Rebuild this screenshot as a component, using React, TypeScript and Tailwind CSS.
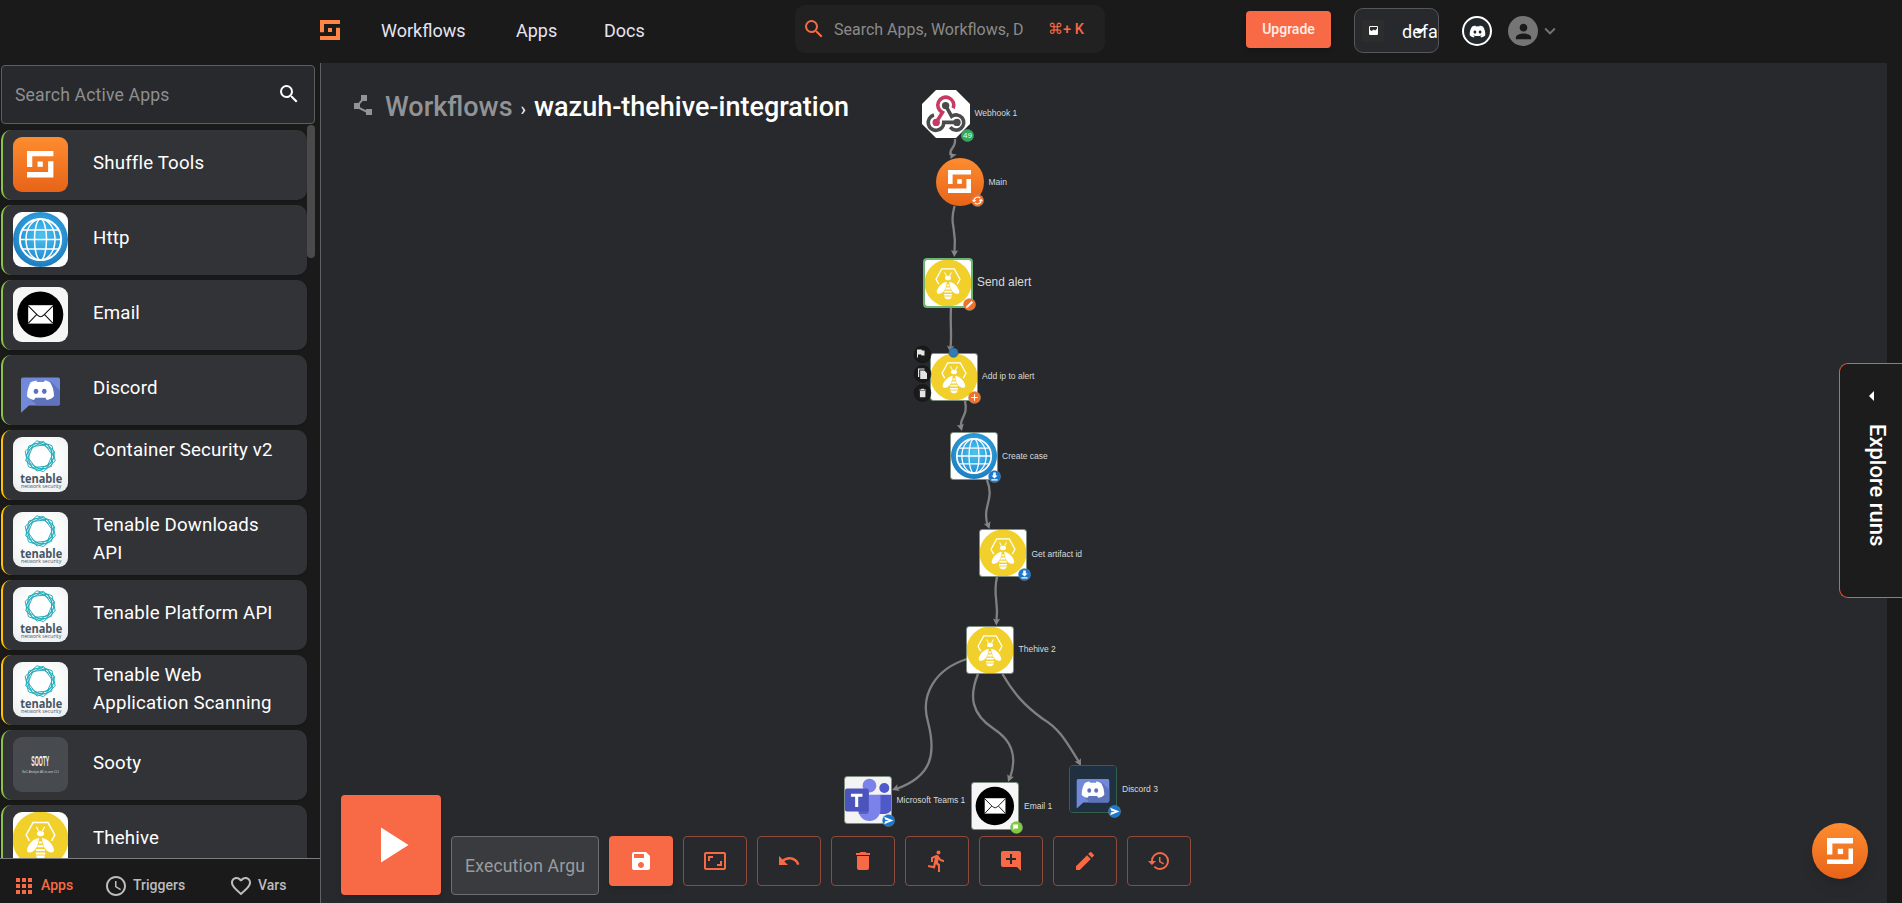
import React from "react";
import {
  MdAccessTime,
  MdAddComment,
  MdApps,
  MdAspectRatio,
  MdDelete,
  MdDirectionsRun,
  MdEdit,
  MdExpandMore,
  MdFavoriteBorder,
  MdHistory,
  MdPerson,
  MdPlayArrow,
  MdPolyline,
  MdSave,
  MdSearch,
  MdUndo,
} from "react-icons/md";
import { FaDiscord } from "react-icons/fa";

/* ---------- logos ---------- */

function ShuffleMark({ className }: { className?: string }) {
  return (
    <svg viewBox="0 0 20 20" className={className} fill="currentColor">
      <path d="M0 0H20V4H4V12.2H0Z" />
      <path d="M20 20H0V16H16V7.8H20Z" />
      <rect x="8" y="8" width="4" height="4" />
    </svg>
  );
}

function ShuffleLogo() {
  return (
    <div className="flex size-full items-center justify-center bg-linear-to-b from-[#fd8c2f] to-[#e86318] text-white">
      <ShuffleMark className="size-[48%]" />
    </div>
  );
}

function GlobeLogo() {
  return (
    <svg viewBox="0 0 55 55" className="block size-full">
      <defs>
        <radialGradient id="globe" cx="0.52" cy="0.42" r="0.55">
          <stop offset="0" stopColor="#4cc4f2" />
          <stop offset="0.6" stopColor="#2f9ddb" />
          <stop offset="1" stopColor="#1f7fc0" />
        </radialGradient>
      </defs>
      <rect width="55" height="55" fill="#fff" />
      <circle cx="27.5" cy="27.5" r="27.5" fill="url(#globe)" />
      <g fill="none" stroke="#fff" strokeWidth="1.5">
        <circle cx="27.5" cy="27.5" r="20.6" strokeWidth="2" />
        <ellipse cx="27.5" cy="27.5" rx="6" ry="20.6" />
        <ellipse cx="27.5" cy="27.5" rx="14.5" ry="20.6" />
        <path d="M7 27.5H48M10 18H45M10 37H45" />
      </g>
    </svg>
  );
}

function EmailLogo() {
  return (
    <svg viewBox="0 0 55 55" className="block size-full">
      <rect width="55" height="55" fill="#f6f6f6" />
      <circle cx="27.3" cy="27.5" r="23" fill="#000" />
      <rect x="15.2" y="18.2" width="24.8" height="18.4" fill="#fff" />
      <path
        d="M15.2 18.8L24.5 28.2Q27.6 31.4 30.7 28.2L40 18.8M15.4 36.2L23.6 27.6M39.8 36.2L31.6 27.6"
        fill="none"
        stroke="#111"
        strokeWidth="1.1"
      />
    </svg>
  );
}

function DiscordBubble() {
  return (
    <svg viewBox="0 0 55 55" className="block size-full">
      <path
        d="M10 15.5H45Q47 15.5 47 17.5V41.5Q47 43.5 45 43.5H16L8 50.8V17.5Q8 15.5 10 15.5Z"
        fill="#7289da"
      />
      <path d="M37.5 19L47 28.5V41.5Q47 43.5 45 43.5H24L15 35Z" fill="#5f73bd" />
      <path
        d="M23.3 18.6C20.6 19 18.3 20 17.5 20.6C15.5 24.3 14 28.6 14 34.3C15.6 36.5 18.5 37.7 21 38L22.4 35.8H32.4L33.8 38C36.5 37.7 39.2 36.5 41 34.3C41 28.6 39.5 24.3 37.3 20.6C36 19.8 34 19 31.6 18.6L31 20H24Z"
        fill="#fff"
      />
      <ellipse cx="23" cy="29.3" rx="2.3" ry="2.6" fill="#5f73bd" />
      <ellipse cx="31.3" cy="29.3" rx="2.3" ry="2.6" fill="#5f73bd" />
    </svg>
  );
}

function DiscordTile() {
  return (
    <div className="size-full bg-[#203040]">
      <DiscordBubble />
    </div>
  );
}

function polygonPoints(radius: number, turn: number) {
  return Array.from({ length: 6 }, (_, i) => {
    const a = ((turn + i * 60) * Math.PI) / 180;
    return `${(27.2 + radius * Math.cos(a)).toFixed(2)},${(19.2 + radius * Math.sin(a)).toFixed(2)}`;
  }).join(" ");
}

function TenableLogo() {
  return (
    <svg viewBox="0 0 55 55" className="block size-full">
      <defs>
        <radialGradient id="tenable" cx="0.5" cy="0.4" r="0.7">
          <stop offset="0.4" stopColor="#fff" />
          <stop offset="1" stopColor="#eceff0" />
        </radialGradient>
      </defs>
      <rect width="55" height="55" fill="url(#tenable)" />
      <g fill="none" stroke="#25adbb" strokeWidth="1">
        <polygon points={polygonPoints(15.8, 18)} />
        <polygon points={polygonPoints(15.2, 42)} />
        <polygon points={polygonPoints(14, 5)} />
        <polygon points={polygonPoints(13, 30)} />
        <polygon points={polygonPoints(12.2, 54)} />
      </g>
      <text
        x="7.2"
        y="46.2"
        fontSize="12.6"
        fontWeight="700"
        textLength="42"
        lengthAdjust="spacingAndGlyphs"
        fontFamily="Open Sans, sans-serif"
        fill="#465564"
      >
        tenable
      </text>
      <text
        x="8"
        y="51.2"
        fontSize="5.8"
        textLength="40.3"
        lengthAdjust="spacingAndGlyphs"
        fontFamily="Open Sans, sans-serif"
        fill="#465564"
      >
        network security
      </text>
    </svg>
  );
}

function SootyLogo() {
  return (
    <svg viewBox="0 0 55 55" className="block size-full">
      <rect width="55" height="55" fill="#474b50" />
      <text
        x="18.3"
        y="29"
        fontSize="14"
        fontWeight="700"
        textLength="18"
        lengthAdjust="spacingAndGlyphs"
        fontFamily="Liberation Sans, sans-serif"
        fill="#f2f2f2"
      >
        SOOTY
      </text>
      <text
        x="9"
        y="36"
        fontSize="3.4"
        textLength="37"
        lengthAdjust="spacingAndGlyphs"
        fontFamily="Liberation Sans, sans-serif"
        fill="#c9cbcd"
      >
        SoC Analyst All-in-one CLI
      </text>
    </svg>
  );
}

function BeeLogo() {
  return (
    <svg viewBox="0 0 55 55" className="block size-full">
      <rect width="55" height="55" fill="#fff" />
      <circle cx="27.5" cy="27.5" r="28" fill="#f2d02c" />
      <path
        d="M16.4 28.8L13.2 23L20 10.6H35L41.8 23L38.6 28.8"
        fill="none"
        stroke="#fff"
        strokeWidth="1.5"
      />
      <g fill="none" stroke="#fff" strokeWidth="1.2">
        <path d="M23.4 14.8L25.6 19M31.6 14.8L29.4 19" />
      </g>
      <ellipse cx="27.5" cy="21.6" rx="3.6" ry="2.7" fill="#fff" />
      <path d="M26 26C20 26.6 14.4 33.4 14 38C13.9 40 15.4 40.8 17.4 40.4C22.6 39.4 25.6 33 26 26Z" fill="#fff" />
      <path d="M29 26C35 26.6 40.6 33.4 41 38C41.1 40 39.6 40.8 37.6 40.4C32.4 39.4 29.4 33 29 26Z" fill="#fff" />
      <g fill="#fff">
        <path d="M26.5 29.4H28.5L29.3 31.4H25.7Z" />
        <path d="M25.1 33H29.9L30.9 35.2H24.1Z" />
        <path d="M23.5 36.9H31.5L32.1 39H22.9Z" />
        <path d="M22.8 40.6H32.2V42.4H22.8Z" />
        <path d="M22.9 43.6H32.1C31.4 46 29.5 47 27.5 47C25.5 47 23.6 46 22.9 43.6Z" />
      </g>
    </svg>
  );
}

function WebhookLogo() {
  return (
    <svg viewBox="0 0 48 48" className="block size-full">
      <path d="M14 0H34L48 14V34L34 48H14L0 34V14Z" fill="#fff" />
      <g fill="none" strokeWidth="3.6">
        <path d="M14.2 32.4L20.4 22.4A8 8 0 1 1 31.2 18.2" stroke="#c73a63" />
        <path d="M23.6 15.5L29.6 26.4A7.6 7.6 0 1 1 28.2 37.2" stroke="#4b4b4b" />
        <path d="M35 32.4H21.8A7.8 7.8 0 1 1 12 25" stroke="#4b4b4b" />
      </g>
      <circle cx="23.6" cy="15.6" r="3.7" fill="#4b4b4b" />
      <circle cx="14.2" cy="32.4" r="3.7" fill="#c73a63" />
      <circle cx="35" cy="32.4" r="3.7" fill="#4b4b4b" />
    </svg>
  );
}

function TeamsLogo() {
  return (
    <svg viewBox="0 0 48 48" className="block size-full">
      <rect width="48" height="48" fill="#f3f3f4" />
      <circle cx="41" cy="11.5" r="5.2" fill="#5059c9" />
      <path d="M36 18.5H48V35Q46 38.5 41 38.5H36Z" fill="#5059c9" />
      <circle cx="25.5" cy="9" r="7.2" fill="#7b83eb" />
      <path d="M14 18.5H37V34.5A11.5 11.5 0 0 1 14 34.5Z" fill="#7b83eb" />
      <path d="M14 13H25V35Q25 38.5 22 38.5H14.4L14 18Z" fill="#5a62c3" />
      <rect x="0" y="12" width="24.5" height="24" rx="2" fill="#4b53bc" />
      <path d="M6.2 17.6H18.2V20.6H13.8V31.4H10.6V20.6H6.2Z" fill="#fff" />
    </svg>
  );
}

/* ---------- header ---------- */

function Header() {
  return (
    <header className="flex h-[63px] shrink-0 items-start bg-[#1a1a1a] pl-[320px]">
      <ShuffleMark className="mt-5 size-5 text-[#ff8544]" />
      <nav className="ml-[41px] mt-[17px] flex text-[18px] leading-[27px] text-[#e6e4f2]">
        <span className="w-[135px]">Workflows</span>
        <span className="w-[88px]">Apps</span>
        <span className="w-[191px]">Docs</span>
      </nav>
      <div className="mt-[5px] flex h-12 w-[310px] items-center rounded-[10px] bg-[#212121] pl-[7px]">
        <MdSearch className="size-6 text-[#f86a45]" />
        <span className="ml-2 w-[190px] overflow-hidden whitespace-nowrap pt-px text-[16px] text-[#8b8b8b]">
          Search Apps, Workflows, D
        </span>
        <span className="ml-6 whitespace-nowrap pt-0.5 text-[14.5px] font-medium text-[#f86a45]">⌘+ K</span>
      </div>
      <button className="ml-[141px] mt-[11px] h-[37px] w-[85px] rounded-[4px] bg-[#f86a45] text-[14px] font-medium text-white/90 shadow-md">
        Upgrade
      </button>
      <div className="relative ml-[23px] mt-2 flex h-[45px] w-[85px] items-center overflow-hidden rounded-[9px] border border-[#55575b] bg-[#27292d]">
        <span className="ml-[7px] flex size-[22px] shrink-0 items-center justify-center bg-[#2d2d2d]">
          <svg viewBox="0 0 9 9" className="size-[9px]">
            <rect width="9" height="9" rx="1.2" fill="#fff" />
            <path d="M1 1H8V2.8L6.2 4.6L4.6 3.4L2.8 5L1 3.9Z" fill="#2d2d2d" />
          </svg>
        </span>
        <span className="ml-[18px] pt-px text-[18px] text-white">defa</span>
        <svg viewBox="0 0 10 5" className="absolute left-[60px] top-[20px] h-[5px] w-[10px]">
          <path d="M0 0H10L5 5Z" fill="#fff" />
        </svg>
      </div>
      <span className="ml-[23px] mt-4 flex size-[30px] items-center justify-center rounded-full border-2 border-white bg-[#23282c]">
        <FaDiscord className="size-[17px] text-white" />
      </span>
      <span className="ml-4 mt-4 flex size-[30px] items-center justify-center rounded-full bg-[#757575] text-[#1a1a1a]">
        <MdPerson className="size-[23px]" />
      </span>
      <MdExpandMore className="ml-px mt-[20px] size-[22px] text-[#757575]" />
    </header>
  );
}

/* ---------- sidebar ---------- */

type AppEntry = { name: string; logo: React.ReactNode; border: string; text: string };

const green = "border-[#8bc34a]";
const amber = "border-[#ffc107]";
const oneLine = "pt-[19px]";
const twoLines = "pt-[6px]";

const apps: AppEntry[] = [
  { name: "Shuffle Tools", logo: <ShuffleLogo />, border: green, text: oneLine },
  { name: "Http", logo: <GlobeLogo />, border: green, text: oneLine },
  { name: "Email", logo: <EmailLogo />, border: green, text: oneLine },
  { name: "Discord", logo: <DiscordBubble />, border: green, text: oneLine },
  { name: "Container Security v2", logo: <TenableLogo />, border: amber, text: twoLines },
  { name: "Tenable Downloads API", logo: <TenableLogo />, border: amber, text: twoLines },
  { name: "Tenable Platform API", logo: <TenableLogo />, border: amber, text: oneLine },
  { name: "Tenable Web Application Scanning", logo: <TenableLogo />, border: amber, text: twoLines },
  { name: "Sooty", logo: <SootyLogo />, border: green, text: oneLine },
  { name: "Thehive", logo: <BeeLogo />, border: green, text: oneLine },
];

function Sidebar() {
  return (
    <aside className="flex w-[321px] shrink-0 flex-col border-r border-[#5f6165] bg-[#1a1a1a]">
      <div className="ml-px mt-0.5 flex h-[59px] w-[314px] shrink-0 items-center justify-between rounded-[4px] border border-[#5d5e61] bg-[#27292d] pl-[13px] pr-[13px]">
        <span className="pt-0.5 text-[17.6px] tracking-[0.00938em] text-[#8e8f91]">Search Active Apps</span>
        <MdSearch className="-mt-px size-6 text-white" />
      </div>
      <div className="flex min-h-0 flex-1 overflow-hidden">
        <ul className="ml-px mt-1.5 flex w-[306px] flex-col gap-[5px]">
          {apps.map((app) => (
            <li
              key={app.name}
              className={`flex h-[70px] shrink-0 rounded-[10px] border-l-2 bg-[#323337] pl-[10px] shadow-sm ${app.border}`}
            >
              <div className="mt-[7px] size-[55px] shrink-0 overflow-hidden rounded-[9px]">{app.logo}</div>
              <span
                className={`ml-[25px] w-[185px] text-[18.67px] leading-[28px] tracking-[0.00938em] text-white ${app.text}`}
              >
                {app.name}
              </span>
            </li>
          ))}
        </ul>
        <div className="mt-px h-[133px] w-2 rounded-full bg-[#4a4a4a]" />
      </div>
      <div className="flex h-[45px] shrink-0 items-center border-t border-[#7b7c7f] pl-3 pt-[9px] text-[14px] font-medium text-[#bdbdbd]">
        <span className="flex w-[92px] items-center gap-[5px] text-[#f86a45]">
          <MdApps className="size-6" />
          Apps
        </span>
        <span className="flex w-[125px] items-center gap-[5px]">
          <MdAccessTime className="size-6" />
          Triggers
        </span>
        <span className="flex items-center gap-[5px]">
          <MdFavoriteBorder className="size-6" />
          Vars
        </span>
      </div>
    </aside>
  );
}

/* ---------- workflow graph ---------- */

/* Node positions are in window coordinates; the canvas starts at ORIGIN. */
const ORIGIN = { x: 321, y: 63 };

type Badge = { x: number; y: number; color: string; glyph: React.ReactNode };

const downloadGlyph = <path d="M5.2 2.4H7.8V5.6H9.6L6.5 8.6L3.4 5.6H5.2ZM3.4 9.3H9.6V10.4H3.4Z" fill="#fff" />;
const sendGlyph = <path d="M2.2 2.8L11.4 6.5L2.2 10.2L3.2 7.3L7 6.5L3.2 5.7Z" fill="#fff" />;

type GraphNode = {
  label: string;
  x: number;
  y: number;
  logo: React.ReactNode;
  shape: string;
  labelX: number;
  labelY: number;
  labelSize: string;
  badge?: Badge;
};

const square = "size-12 rounded-[3px] border border-[#b9d3bb]/60";
const small = "text-[8.5px]";

const nodes: GraphNode[] = [
  {
    label: "Webhook 1", x: 922, y: 90, logo: <WebhookLogo />, shape: "size-12", labelX: 974.5, labelY: 113, labelSize: small,
    badge: {
      x: 967, y: 135, color: "#2dab5c",
      glyph: <text x="6.5" y="9" textAnchor="middle" fontSize="8" fontFamily="Liberation Sans, sans-serif" fill="#e8f5ec">49</text>,
    },
  },
  {
    label: "Main", x: 936, y: 158, logo: <ShuffleLogo />, shape: "size-12 rounded-full", labelX: 988.5, labelY: 182, labelSize: small,
    badge: {
      x: 977.5, y: 200, color: "#f3702a",
      glyph: (
        <g fill="none" stroke="#fff" strokeWidth="1.1">
          <path d="M3 7A3.6 3.6 0 0 1 9.2 4.2M10 6A3.6 3.6 0 0 1 3.8 8.8" />
          <path d="M1.6 6L3 7.4L4.6 6.2M11.4 7L10 5.6L8.4 6.8" />
        </g>
      ),
    },
  },
  {
    label: "Send alert", x: 923, y: 258, logo: <BeeLogo />, shape: "size-[50px] rounded-[4px] border-2 border-[#6cb573]", labelX: 977, labelY: 283, labelSize: "text-[11.9px]",
    badge: { x: 969.5, y: 304, color: "#f3702a", glyph: <path d="M3 10L3.4 8.2L8.6 3L10 4.4L4.8 9.6Z" fill="#fff" /> },
  },
  {
    label: "Add ip to alert", x: 929.5, y: 353, logo: <BeeLogo />, shape: square, labelX: 982, labelY: 376, labelSize: small,
    badge: { x: 974.5, y: 397, color: "#f3702a", glyph: <path d="M6.5 3.2V9.8M3.2 6.5H9.8" stroke="#fff" strokeWidth="1.1" /> },
  },
  {
    label: "Create case", x: 950.4, y: 432, logo: <GlobeLogo />, shape: square, labelX: 1002, labelY: 455.5, labelSize: small,
    badge: { x: 994.5, y: 476.5, color: "#1976d2", glyph: downloadGlyph },
  },
  {
    label: "Get artifact id", x: 979, y: 529.4, logo: <BeeLogo />, shape: square, labelX: 1031.5, labelY: 553.5, labelSize: small,
    badge: { x: 1024, y: 574.5, color: "#1976d2", glyph: downloadGlyph },
  },
  {
    label: "Thehive 2", x: 966.4, y: 626, logo: <BeeLogo />, shape: square, labelX: 1018.5, labelY: 649, labelSize: small,
  },
  {
    label: "Microsoft Teams 1", x: 843.6, y: 776.4, logo: <TeamsLogo />, shape: square, labelX: 896.5, labelY: 799.5, labelSize: small,
    badge: { x: 888.5, y: 820.5, color: "#1976d2", glyph: sendGlyph },
  },
  {
    label: "Email 1", x: 971.3, y: 782, logo: <EmailLogo />, shape: square, labelX: 1024, labelY: 805.5, labelSize: small,
    badge: {
      x: 1016.5, y: 827.3, color: "#7fcb3f",
      glyph: <path d="M3.2 3.4H8V7.6H4.6L3.2 9Z" fill="#fff" />,
    },
  },
  {
    label: "Discord 3", x: 1069, y: 765.4, logo: <DiscordTile />, shape: "size-12 rounded-[4px] border border-[#35604a]", labelX: 1122, labelY: 789, labelSize: small,
    badge: { x: 1114, y: 811, color: "#1976d2", glyph: sendGlyph },
  },
];

const edges = [
  "M955 139C956 149 949 147 950.5 155",
  "M954.5 206C949 227 957 226 954.5 252",
  "M951 308C950 325 952 332 950.5 348",
  "M965 401C968.5 416 959.5 417 961 427",
  "M987 480C995 500 982 505 987.5 525",
  "M997 577C992.5 597 999 600 996.5 621",
  "M967 659C935 669 920 695 928 722C936 753 933 776 896 789",
  "M978 674C969 696 971 714 994 729C1011 740 1018 755 1010 778",
  "M1002.5 674C1014 694 1025 706 1043 719C1060 729 1067 743 1079 762",
];

const arrows: [number, number, number][] = [
  [950.5, 159, 115],
  [954.3, 257, 92],
  [950.3, 352.5, 92],
  [961.8, 431, 78],
  [989.5, 529, 70],
  [996.3, 625.5, 92],
  [892, 790, 160],
  [1008, 782, 112],
  [1081, 766, 62],
];

function Graph() {
  return (
    <div className="absolute inset-0 overflow-hidden">
      <svg viewBox="321 63 1566 840" className="absolute left-0 top-0 h-[840px] w-[1566px]">
        <g fill="none" stroke="#808080" strokeWidth="2.3">
          {edges.map((d) => (
            <path key={d} d={d} />
          ))}
        </g>
        {arrows.map(([x, y, angle]) => (
          <path key={`${x}-${y}`} d="M0 0L-7 -3.6L-5.6 0L-7 3.6Z" fill="#868686" transform={`translate(${x} ${y}) rotate(${angle})`} />
        ))}
      </svg>
      {nodes.map((n) => (
        <div key={n.label}>
          <div className={`absolute overflow-hidden ${n.shape}`} style={{ left: n.x - ORIGIN.x, top: n.y - ORIGIN.y }}>
            {n.logo}
          </div>
          <span
            className={`absolute -translate-y-1/2 whitespace-nowrap font-['Liberation_Sans',sans-serif] leading-none text-[#dadada] ${n.labelSize}`}
            style={{ left: n.labelX - ORIGIN.x, top: n.labelY - ORIGIN.y }}
          >
            {n.label}
          </span>
          {n.badge && (
            <svg
              viewBox="0 0 13 13"
              className="absolute size-[13px]"
              style={{ left: n.badge.x - 6.5 - ORIGIN.x, top: n.badge.y - 6.5 - ORIGIN.y }}
            >
              <circle cx="6.5" cy="6.5" r="6.1" fill={n.badge.color} stroke="#8fa59a" strokeOpacity="0.6" strokeWidth="0.6" />
              {n.badge.glyph}
            </svg>
          )}
        </div>
      ))}
      <svg viewBox="913 345 50 60" className="absolute left-[592px] top-[282px] h-[60px] w-[50px]">
        <circle cx="953.5" cy="352.6" r="4.7" fill="#337ab7" stroke="#234a6a" strokeWidth="0.5" />
        <g fill="#1a1a1a" stroke="#101010" strokeWidth="0.6">
          <circle cx="922.5" cy="354.5" r="8.4" />
          <circle cx="922.5" cy="374" r="8.4" />
          <circle cx="922.5" cy="393" r="8.4" />
        </g>
        <g fill="#e4e4e4">
          <path d="M917 349.5H921.5L922 350.5H924.5V355.5H921.5L921 354.5H918V357.5H917Z" />
          <path d="M918 368.5H924.5V369.6H919.2V377H918ZM920.2 370.6H924.4L927 373.2V379H920.2Z" />
          <path d="M919.5 389.4H921L921.6 388.8H923.6L924.2 389.4H925.8V390.4H919.5ZM919.9 390.9H925.4V396.8Q925.4 397.3 924.8 397.3H920.5Q919.9 397.3 919.9 396.8Z" />
        </g>
      </svg>
    </div>
  );
}

/* ---------- toolbar ---------- */

const tools = [MdAspectRatio, MdUndo, MdDelete, MdDirectionsRun, MdAddComment, MdEdit, MdHistory];

function Toolbar() {
  return (
    <div className="relative flex items-end gap-2.5 pb-2 pl-5">
      <button className="flex size-[100px] items-center justify-center rounded-[4px] bg-[#f86a45] text-white shadow-md">
        <MdPlayArrow className="size-[60px]" />
      </button>
      <div className="flex h-[59px] w-[148px] items-center rounded-[4px] border border-[#6c6e72] bg-[#393b3f] px-[13px]">
        <span className="overflow-hidden whitespace-nowrap pt-px text-[17.6px] tracking-[0.00938em] text-[#9b9c9e]">
          Execution Argu
        </span>
      </div>
      <div className="flex gap-2.5 self-end pb-[9px]">
        <button className="flex h-[50px] w-16 items-center justify-center rounded-[4px] bg-[#f86a45] text-white shadow-md">
          <MdSave className="size-6" />
        </button>
        {tools.map((Icon, i) => (
          <button
            key={i}
            className="flex h-[50px] w-16 items-center justify-center rounded-[4px] border border-[#904a39] text-[#f86a45]"
          >
            <Icon className="size-6" />
          </button>
        ))}
      </div>
    </div>
  );
}

/* ---------- page ---------- */

export default function App() {
  return (
    <div className="relative flex h-[903px] w-[1902px] flex-col overflow-hidden bg-[#1a1a1a] font-['Roboto',sans-serif]">
      <Header />
      <div className="flex min-h-0 flex-1">
        <Sidebar />
        <main className="relative flex w-[1566px] flex-col justify-between bg-[#27292d]">
          <Graph />
          <h1 className="relative flex items-center pl-[30px] pt-[24px] text-[27px] font-medium leading-[36px]">
            <MdPolyline className="-mt-1 size-6 text-[#929395]" />
            <span className="ml-[10px] text-[#929395]">Workflows</span>
            <span className="ml-2 mt-1 text-[18px] font-normal text-white">›</span>
            <span className="ml-2 text-white">wazuh-thehive-integration</span>
          </h1>
          <Toolbar />
        </main>
      </div>

      <div className="absolute right-0 top-[363px] flex h-[235px] w-[63px] flex-col rounded-l-[9px] border border-r-0 border-[#f0573c] bg-[#1c1c1c]">
        <svg viewBox="0 0 5 10" className="ml-[29px] mt-[27px] h-[10px] w-[5px]">
          <path d="M5 0V10L0 5Z" fill="#fff" />
        </svg>
        <span className="mr-[8px] mt-[23px] w-[33px] self-end text-[22px] font-medium leading-[33px] text-white [writing-mode:vertical-rl]">
          Explore runs
        </span>
      </div>

      <div className="absolute left-[1812px] top-[823px] size-14 overflow-hidden rounded-full shadow-lg">
        <ShuffleLogo />
      </div>
    </div>
  );
}
